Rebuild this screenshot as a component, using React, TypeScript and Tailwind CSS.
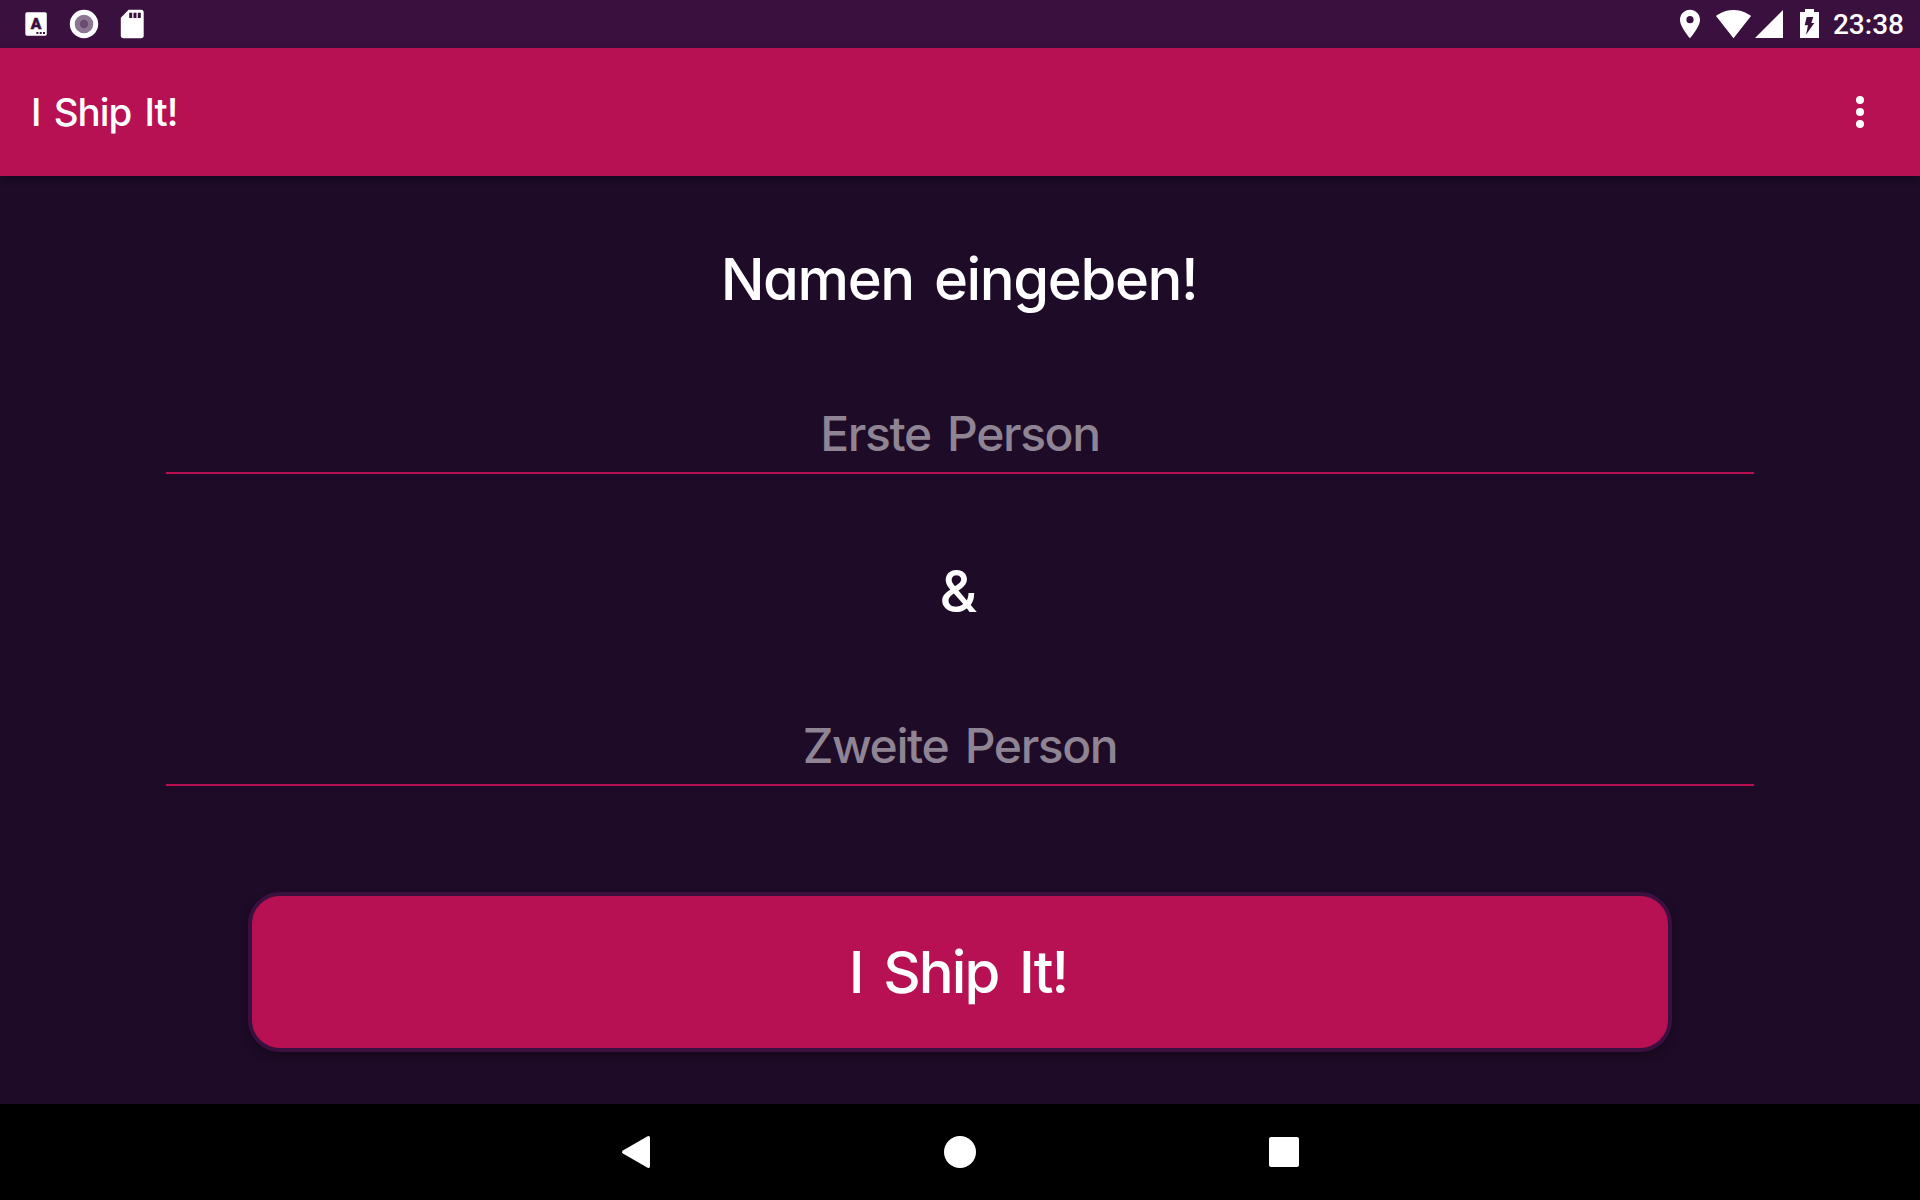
import { ReactNode } from 'react'

const letters = "font-['Inter',sans-serif] [font-feature-settings:'cv11','ss03'] whitespace-nowrap"

function StatusBar() {
  return (
    <div className="flex h-12 items-center justify-between bg-[#3a103f] text-white">
      <div className="flex h-12 items-center">
        <svg className="h-12 w-12" viewBox="0 0 48 48" fill="none">
          <rect x="25.3" y="12.3" width="21.5" height="23.4" rx="1.6" fill="#fff" />
          <text
            x="36"
            y="29"
            textAnchor="middle"
            fontSize="15.5"
            fontWeight="900"
            fill="#3a103f"
            stroke="#3a103f"
            strokeWidth="0.5"
            className="font-['Roboto',sans-serif]"
          >
            A
          </text>
          <path d="M36.4 32h2v2h-2zM39.7 32h2v2h-2zM43 32h2v2h-2z" fill="#3a103f" />
        </svg>
        <svg className="ml-5 h-8 w-8" viewBox="0 0 32 32">
          <circle cx="16" cy="16" r="14.2" fill="#fff" />
          <circle cx="16" cy="16" r="9.3" fill="#8c7693" />
          <circle cx="16" cy="16" r="4.2" fill="#6a4a71" />
        </svg>
        <svg className="ml-5 h-8 w-6" viewBox="0 0 24 32">
          <path
            fill="#fff"
            fillRule="evenodd"
            d="M8.6 1.8H21a2.7 2.7 0 0 1 2.7 2.7v23a2.7 2.7 0 0 1-2.7 2.7H3.5a2.7 2.7 0 0 1-2.7-2.7V9.8zM9.2 4.8V10h3V4.8zM13.5 4.8V10h3V4.8zM17.8 4.8V10h3V4.8z"
          />
        </svg>
      </div>
      <div className="flex h-12 items-center pr-4">
        <svg className="h-12 w-[142px]" viewBox="1678 0 142 48" fill="#fff">
          <path
            fillRule="evenodd"
            d="M1690 9.8c-5.5 0-10 4.4-10 9.9 0 7.4 10 18.5 10 18.5s10-11.1 10-18.5c0-5.5-4.5-9.9-10-9.9zm0 13.5a3.6 3.6 0 1 1 0-7.2 3.6 3.6 0 0 1 0 7.2z"
          />
          <path d="M1733.5 38.2 1751 16c-.7-.5-7.4-6-17.5-6s-16.8 5.5-17.5 6z" />
          <path d="M1755 38h28V10z" />
          <path
            fillRule="evenodd"
            d="M1805 9h9v3h5v26h-19V12h5zM1806.7 17l-2 8.3h3.3l-2 9.4 8.3-11.7h-3l2-6z"
          />
        </svg>
        <span className="ml-[13px] mt-[2px] font-['Roboto',sans-serif] text-[28px] font-medium leading-8">
          23:38
        </span>
      </div>
    </div>
  )
}

function Toolbar() {
  return (
    <header className="relative z-10 flex h-32 items-center justify-between bg-[#b71154] pl-[31px] pr-11 text-white shadow-[0_2px_8px_rgba(0,0,0,0.3)]">
      <h1
        className={`${letters} text-[38.5px] font-[450] leading-[48px] tracking-[-1px] [word-spacing:4px]`}
      >
        I Ship It!
      </h1>
      <button type="button" className="flex w-8 flex-col items-center gap-1">
        <span className="size-2 rounded-full bg-white" />
        <span className="size-2 rounded-full bg-white" />
        <span className="size-2 rounded-full bg-white" />
      </button>
    </header>
  )
}

function Field({ children }: { children: ReactNode }) {
  return (
    <div
      className={`${letters} mx-[166px] flex h-[82px] justify-center border-b-2 border-[#b71154] text-[48px] font-[450] leading-[84px] tracking-[-1.4px] text-[#8f8493] [word-spacing:5px]`}
    >
      {children}
    </div>
  )
}

function NavBar() {
  return (
    <nav className="flex h-24 items-center justify-center gap-[292px] bg-black">
      <svg className="h-8 w-8" viewBox="0 0 32 32" fill="#fff">
        <path d="M27.6.3Q30-.6 30 2v28q0 2.6-2.4 1.7L3.3 17.8q-2.6-1.8 0-3.6z" />
      </svg>
      <span className="size-8 rounded-full bg-white" />
      <span className="mx-px size-[30px] rounded-[2px] bg-white" />
    </nav>
  )
}

export default function App() {
  return (
    <div className="flex h-[1200px] w-[1920px] flex-col overflow-hidden bg-[#1e0b27]">
      <StatusBar />
      <Toolbar />
      <main className="flex flex-1 flex-col">
        <h2
          className={`${letters} mt-[63px] pr-0.5 text-center text-[58px] font-[450] leading-[80px] tracking-[-1.4px] text-white [word-spacing:6px]`}
        >
          Namen eingeben!
        </h2>
        <div className="mt-[73px]">
          <Field>Erste Person</Field>
        </div>
        <div
          className={`${letters} mt-[77px] pr-1 text-center text-[58px] font-[450] leading-[80px] tracking-[-1px] text-white`}
        >
          &amp;
        </div>
        <div className="mt-[73px]">
          <Field>Zweite Person</Field>
        </div>
        <button
          type="button"
          className={`${letters} mx-[248px] mt-[106px] h-40 rounded-[32px] border-4 border-[#3a103f] bg-[#b71154] pr-1 text-[58px] font-[450] leading-[80px] tracking-[-1.9px] text-white shadow-[0_4px_8px_rgba(0,0,0,0.25)] [word-spacing:7px]`}
        >
          I Ship It!
        </button>
      </main>
      <NavBar />
    </div>
  )
}
